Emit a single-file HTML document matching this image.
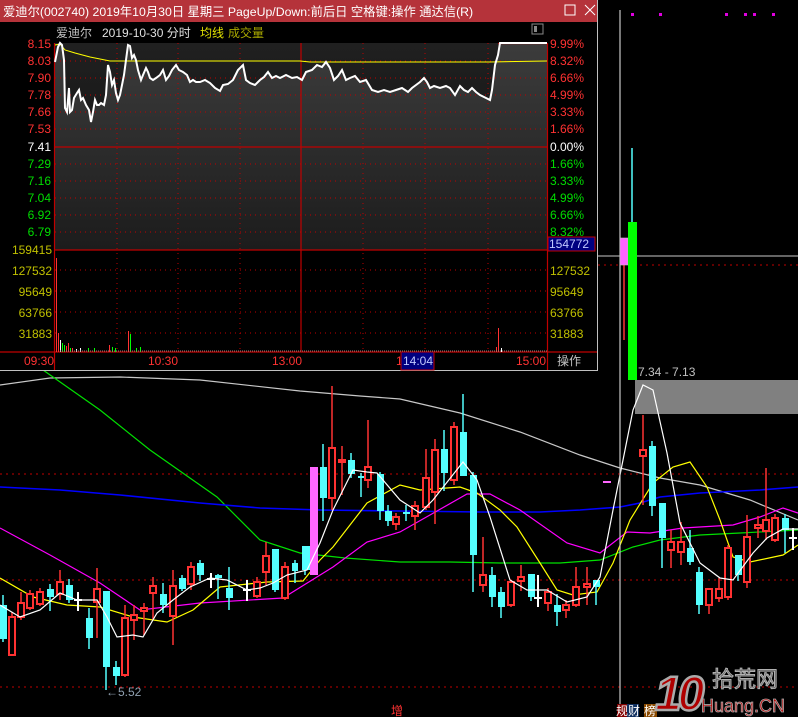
<!DOCTYPE html>
<html><head><meta charset="utf-8"><style>
html,body{margin:0;padding:0;background:#000;width:798px;height:717px;overflow:hidden}
svg{display:block}
text{font-family:"Liberation Sans","Noto Sans CJK SC",sans-serif}
</style></head><body>
<svg width="798" height="717" viewBox="0 0 798 717" xmlns="http://www.w3.org/2000/svg">
<defs>
<linearGradient id="pg" x1="0" y1="0" x2="0" y2="1"><stop offset="0" stop-color="#3c3c3c"/><stop offset="1" stop-color="#1c1c1c"/></linearGradient>
<linearGradient id="bg" x1="0" y1="0" x2="0" y2="1"><stop offset="0" stop-color="#202020"/><stop offset="1" stop-color="#0e0e0e"/></linearGradient>
</defs>
<rect width="798" height="717" fill="#000"/>
<g stroke="#c00000" stroke-width="1" stroke-dasharray="2,4">
<line x1="598" y1="265" x2="798" y2="265"/>
<line x1="0" y1="474" x2="798" y2="474"/>
<line x1="0" y1="580" x2="798" y2="580"/>
<line x1="0" y1="687" x2="798" y2="687"/>
</g>
<g fill="none" stroke-width="1.2">
<polyline stroke="#c8c8c8" points="0,385 50,378 120,377 200,380 300,391 360,396 400,399 460,413 520,432 580,455 620,468 660,478 700,485 750,500 798,520"/>
<polyline stroke="#00e000" points="43,370 100,410 150,450 217,497 260,540 300,553 345,558 400,562 450,562 500,563 560,563 600,560 633,547 660,540 700,535 740,533 798,530"/>
<polyline stroke="#0000ff" stroke-width="1.6" points="0,487 60,490 120,495 200,503 260,508 320,510 400,511 480,512 540,512 580,510 620,507 640,503 660,497 700,493 760,490 798,487"/>
<polyline stroke="#ff00ff" points="0,528 50,555 100,583 140,610 200,603 283,598 333,567 367,542 400,532 467,494 490,494 520,510 567,543 600,553 627,532 650,533 683,528 733,525 760,517 783,508 798,513"/>
<polyline stroke="#ffff00" points="0,578 33,597 67,605 100,607 133,617 167,622 193,610 220,587 267,582 303,581 320,560 333,547 367,503 400,485 420,490 460,487 477,493 500,510 517,527 540,563 557,590 573,595 597,592 613,563 630,520 653,483 673,467 690,462 707,487 720,520 733,557 750,562 783,555 798,545"/>
</g>
<rect x="635" y="380" width="163" height="34" fill="#808080"/>
<g>
<g stroke="#54ffff" stroke-width="1.5">
<line x1="3" y1="595" x2="3" y2="642"/><line x1="50" y1="584" x2="50" y2="611"/><line x1="69" y1="579" x2="69" y2="603"/><line x1="89" y1="608" x2="89" y2="649"/><line x1="106" y1="591" x2="106" y2="690"/><line x1="116" y1="661" x2="116" y2="685"/><line x1="163" y1="583" x2="163" y2="613"/><line x1="182" y1="575" x2="182" y2="591"/><line x1="200" y1="560" x2="200" y2="581"/><line x1="218" y1="574" x2="218" y2="599"/><line x1="229" y1="567" x2="229" y2="610"/><line x1="275" y1="549" x2="275" y2="592"/><line x1="295" y1="560" x2="295" y2="583"/><line x1="305" y1="546" x2="305" y2="575"/><line x1="323" y1="444" x2="323" y2="521"/><line x1="351" y1="453" x2="351" y2="478"/><line x1="361" y1="473" x2="361" y2="497"/><line x1="380" y1="472" x2="380" y2="520"/><line x1="388" y1="505" x2="388" y2="526"/><line x1="406" y1="505" x2="406" y2="521"/><line x1="444" y1="430" x2="444" y2="491"/><line x1="463" y1="394" x2="463" y2="476"/><line x1="473" y1="472" x2="473" y2="592"/><line x1="492" y1="567" x2="492" y2="607"/><line x1="501" y1="587" x2="501" y2="618"/><line x1="531" y1="574" x2="531" y2="601"/><line x1="557" y1="594" x2="557" y2="626"/><line x1="596" y1="580" x2="596" y2="605"/><line x1="652" y1="441" x2="652" y2="516"/><line x1="662" y1="503" x2="662" y2="568"/><line x1="690" y1="530" x2="690" y2="565"/><line x1="699" y1="567" x2="699" y2="614"/><line x1="738" y1="555" x2="738" y2="581"/><line x1="785" y1="514" x2="785" y2="553"/><line x1="632" y1="148" x2="632" y2="222"/>
</g>
<g fill="#54ffff">
<rect x="0" y="605" width="7" height="34"/><rect x="47" y="589" width="7" height="8"/><rect x="66" y="585" width="7" height="15"/><rect x="86" y="618" width="7" height="20"/><rect x="103" y="591" width="7" height="76"/><rect x="113" y="667" width="7" height="9"/><rect x="160" y="594" width="7" height="11"/><rect x="179" y="578" width="7" height="11"/><rect x="197" y="563" width="7" height="12"/><rect x="215" y="575" width="7" height="3"/><rect x="226" y="588" width="7" height="10"/><rect x="272" y="549" width="7" height="41"/><rect x="292" y="563" width="6" height="8"/><rect x="302" y="546" width="8" height="24"/><rect x="320" y="467" width="7" height="31"/><rect x="348" y="460" width="7" height="14"/><rect x="358" y="476" width="6" height="2"/><rect x="377" y="474" width="7" height="37"/><rect x="385" y="511" width="7" height="10"/><rect x="403" y="512" width="7" height="2"/><rect x="441" y="449" width="7" height="24"/><rect x="460" y="432" width="7" height="44"/><rect x="470" y="475" width="7" height="80"/><rect x="489" y="575" width="7" height="22"/><rect x="498" y="592" width="7" height="15"/><rect x="528" y="574" width="7" height="23"/><rect x="554" y="605" width="7" height="7"/><rect x="593" y="580" width="7" height="7"/><rect x="649" y="446" width="7" height="60"/><rect x="659" y="503" width="7" height="35"/><rect x="687" y="548" width="7" height="14"/><rect x="696" y="572" width="7" height="33"/><rect x="735" y="555" width="7" height="20"/><rect x="782" y="518" width="7" height="12"/>
</g>
<g stroke="#ff3232" stroke-width="1.5">
<line x1="12" y1="612" x2="12" y2="655"/><line x1="21" y1="592" x2="21" y2="620"/><line x1="30" y1="590" x2="30" y2="610"/><line x1="40" y1="588" x2="40" y2="606"/><line x1="60" y1="570" x2="60" y2="600"/><line x1="97" y1="568" x2="97" y2="638"/><line x1="125" y1="605" x2="125" y2="677"/><line x1="134" y1="605" x2="134" y2="640"/><line x1="144" y1="603" x2="144" y2="635"/><line x1="153" y1="577" x2="153" y2="620"/><line x1="173" y1="570" x2="173" y2="645"/><line x1="191" y1="562" x2="191" y2="590"/><line x1="257" y1="577" x2="257" y2="598"/><line x1="266" y1="542" x2="266" y2="585"/><line x1="285" y1="562" x2="285" y2="600"/><line x1="332" y1="386" x2="332" y2="510"/><line x1="342" y1="446" x2="342" y2="495"/><line x1="368" y1="420" x2="368" y2="488"/><line x1="396" y1="513" x2="396" y2="530"/><line x1="415" y1="501" x2="415" y2="530"/><line x1="426" y1="449" x2="426" y2="510"/><line x1="435" y1="439" x2="435" y2="524"/><line x1="454" y1="422" x2="454" y2="485"/><line x1="483" y1="537" x2="483" y2="592"/><line x1="511" y1="580" x2="511" y2="607"/><line x1="521" y1="565" x2="521" y2="591"/><line x1="548" y1="588" x2="548" y2="611"/><line x1="566" y1="600" x2="566" y2="618"/><line x1="576" y1="567" x2="576" y2="607"/><line x1="587" y1="567" x2="587" y2="605"/><line x1="643" y1="415" x2="643" y2="505"/><line x1="671" y1="530" x2="671" y2="568"/><line x1="681" y1="522" x2="681" y2="565"/><line x1="709" y1="589" x2="709" y2="614"/><line x1="719" y1="578" x2="719" y2="602"/><line x1="728" y1="545" x2="728" y2="600"/><line x1="747" y1="515" x2="747" y2="588"/><line x1="758" y1="516" x2="758" y2="538"/><line x1="766" y1="468" x2="766" y2="540"/><line x1="775" y1="514" x2="775" y2="542"/><line x1="624" y1="265" x2="624" y2="340"/>
</g>
<g fill="#000" stroke="#ff3232" stroke-width="2">
<rect x="9" y="617" width="6" height="38"/><rect x="18" y="603" width="6" height="14"/><rect x="27" y="594" width="6" height="14"/><rect x="37" y="592" width="6" height="12"/><rect x="57" y="582" width="6" height="12"/><rect x="94" y="589" width="6" height="13"/><rect x="122" y="618" width="6" height="57"/><rect x="131" y="615" width="6" height="5"/><rect x="141" y="608" width="6" height="3"/><rect x="150" y="586" width="6" height="7"/><rect x="170" y="586" width="6" height="30"/><rect x="188" y="567" width="6" height="17"/><rect x="254" y="582" width="6" height="14"/><rect x="263" y="556" width="6" height="16"/><rect x="282" y="567" width="6" height="31"/><rect x="329" y="448" width="6" height="50"/><rect x="339" y="460" width="6" height="2"/><rect x="365" y="467" width="6" height="13"/><rect x="393" y="517" width="6" height="7"/><rect x="412" y="506" width="6" height="10"/><rect x="423" y="478" width="6" height="29"/><rect x="432" y="450" width="6" height="42"/><rect x="451" y="427" width="6" height="53"/><rect x="480" y="575" width="6" height="10"/><rect x="508" y="582" width="6" height="23"/><rect x="518" y="577" width="6" height="4"/><rect x="545" y="592" width="6" height="11"/><rect x="563" y="605" width="6" height="5"/><rect x="573" y="587" width="6" height="18"/><rect x="584" y="584" width="6" height="3"/><rect x="640" y="450" width="6" height="6"/><rect x="668" y="542" width="6" height="8"/><rect x="678" y="542" width="6" height="10"/><rect x="706" y="589" width="6" height="16"/><rect x="716" y="589" width="6" height="9"/><rect x="725" y="548" width="6" height="49"/><rect x="744" y="537" width="6" height="45"/><rect x="755" y="525" width="6" height="3"/><rect x="763" y="520" width="6" height="11"/><rect x="772" y="518" width="6" height="22"/>
</g>
<rect x="310" y="467" width="8" height="108" fill="#ff66ff"/>
<g stroke="#fff" stroke-width="2">
<line x1="78" y1="592" x2="78" y2="611"/><line x1="74" y1="600" x2="82" y2="600"/>
<line x1="211" y1="573" x2="211" y2="588"/><line x1="207" y1="579" x2="215" y2="579"/>
<line x1="247" y1="580" x2="247" y2="601"/><line x1="243" y1="590" x2="251" y2="590"/>
<line x1="538" y1="575" x2="538" y2="607"/><line x1="534" y1="598" x2="542" y2="598"/>
<line x1="793" y1="528" x2="793" y2="550"/><line x1="789" y1="538" x2="797" y2="538"/>
</g>
</g>
<polyline fill="none" stroke="#fff" stroke-width="1.2" points="0,605 20,617 40,610 60,593 77,600 97,600 107,617 117,637 133,635 143,637 157,613 173,600 190,587 210,578 227,580 247,590 260,588 273,583 287,575 307,570 320,543 333,510 353,470 367,472 377,473 400,500 420,513 433,500 463,462 477,480 490,517 510,580 527,590 547,590 567,602 587,597 600,577 613,510 623,460 633,410 643,385 653,390 667,453 680,523 700,563 720,578 733,580 753,553 767,538 783,529 798,529"/>
<line x1="620" y1="10" x2="620" y2="717" stroke="#c8c8c8" stroke-width="1.2"/>
<line x1="598" y1="256" x2="798" y2="256" stroke="#c8c8c8" stroke-width="1"/>
<rect x="620" y="238" width="8" height="27" fill="#ff66ff" stroke="#c0c0c0" stroke-width="0.6"/>
<rect x="628" y="222" width="9" height="158" fill="#00ff00"/>
<line x1="603" y1="482" x2="611" y2="482" stroke="#ff66ff" stroke-width="2"/>
<g fill="#e000e0"><rect x="631" y="13" width="3" height="3"/><rect x="659" y="13" width="3" height="3"/><rect x="725" y="13" width="3" height="3"/><rect x="744" y="13" width="3" height="3"/><rect x="753" y="13" width="3" height="3"/><rect x="772" y="13" width="3" height="3"/></g>
<text x="638" y="376" font-size="12" fill="#c0c0c0">7.34 - 7.13</text>
<text x="106" y="696" font-size="12" fill="#8fa0b0">←5.52</text>
<text x="391" y="715" font-size="12" fill="#ff3232">增</text>
<rect x="617" y="704" width="10" height="13" fill="#800000"/><rect x="627" y="704" width="12" height="13" fill="#103060"/>
<text x="616" y="715" font-size="12" fill="#fff">规财</text>
<rect x="644" y="704" width="13" height="13" fill="#8a4a00"/>
<text x="644" y="715" font-size="12" fill="#fff">榜</text>
<g>
<text x="655" y="710" font-size="48" font-weight="bold" font-style="italic" fill="#b00000" stroke="#aaa" stroke-width="2.5" letter-spacing="-4">10</text>
<text x="712" y="687" font-size="22" fill="#505050" stroke="#b0b0b0" stroke-width="1" font-family="Noto Sans CJK SC,sans-serif">拾荒网</text>
<text x="701" y="712" font-size="18" fill="#c00000" stroke="#aaa" stroke-width="0.8">Huang.CN</text>
</g>

<rect x="0" y="0" width="598" height="371" fill="#000"/>
<rect x="0" y="0" width="598" height="22" fill="#b5333a"/>
<text x="3" y="16" font-size="12.3" fill="#fff">爱迪尔(002740) 2019年10月30日 星期三 PageUp/Down:前后日 空格键:操作 通达信(R)</text>
<rect x="565" y="5" width="10" height="10" fill="none" stroke="#fff" stroke-width="1"/>
<path d="M585 5 L595 15 M595 5 L585 15" stroke="#fff" stroke-width="1"/>
<line x1="597.5" y1="0" x2="597.5" y2="371" stroke="#c0c0c0"/>
<line x1="0" y1="370.5" x2="598" y2="370.5" stroke="#c0c0c0"/>
<text x="56" y="37" font-size="12" fill="#c0c0c0">爱迪尔</text>
<text x="102" y="37" font-size="12" fill="#e0e0e0">2019-10-30 分时</text>
<text x="200" y="37" font-size="12" fill="#e0e000">均线</text>
<text x="228" y="37" font-size="12" fill="#a8a800">成交量</text>
<rect x="532" y="24" width="11" height="10" fill="none" stroke="#888" stroke-width="1"/><rect x="534" y="26" width="3" height="6" fill="#888"/>
<rect x="55" y="43" width="492" height="207" fill="url(#bg)"/>
<polygon fill="url(#pg)" points="55,250 55,62 58,47 60,43 62,45 64,60 65,108 67,112 69,88 70,112 72,110 74,98 77,93 79,90 81,100 83,98 86,105 89,110 91,122 93,112 95,100 97,105 99,105 101,103 104,105 106,95 108,65 110,72 112,85 114,80 116,93 118,100 120,95 122,85 124,75 126,60 128,45 130,46 132,58 134,55 136,60 138,70 141,80 143,75 146,68 148,72 150,78 153,80 156,78 160,75 163,70 166,80 169,76 172,70 176,65 179,70 183,72 187,75 190,82 193,80 196,82 200,82 205,80 210,83 215,88 220,91 223,85 228,84 233,80 238,70 243,65 246,80 250,83 255,85 260,80 264,77 268,72 272,78 276,76 280,78 286,75 292,78 297,77 302,80 306,72 312,70 317,65 322,67 326,62 330,68 334,80 338,76 342,70 346,80 350,78 355,76 360,82 366,80 372,90 378,92 384,90 390,92 396,90 402,88 408,92 412,88 416,85 420,82 424,78 427,82 430,88 434,86 440,88 446,86 450,88 455,95 460,86 464,90 468,92 472,88 476,92 480,95 486,98 490,100 492,90 495,65 498,55 500,43 547,43 547,250"/>
<g stroke="#c00000" stroke-width="1" stroke-dasharray="1,4">
<line x1="55" y1="61" x2="547" y2="61"/><line x1="55" y1="78" x2="547" y2="78"/><line x1="55" y1="95" x2="547" y2="95"/><line x1="55" y1="112" x2="547" y2="112"/><line x1="55" y1="129" x2="547" y2="129"/><line x1="55" y1="164" x2="547" y2="164"/><line x1="55" y1="181" x2="547" y2="181"/><line x1="55" y1="198" x2="547" y2="198"/><line x1="55" y1="215" x2="547" y2="215"/><line x1="55" y1="232" x2="547" y2="232"/>
<line x1="55" y1="270" x2="547" y2="270"/><line x1="55" y1="291" x2="547" y2="291"/><line x1="55" y1="312" x2="547" y2="312"/><line x1="55" y1="333" x2="547" y2="333"/>
<line x1="117" y1="43" x2="117" y2="352"/><line x1="178" y1="43" x2="178" y2="352"/><line x1="240" y1="43" x2="240" y2="352"/><line x1="363" y1="43" x2="363" y2="352"/><line x1="425" y1="43" x2="425" y2="352"/><line x1="488" y1="43" x2="488" y2="352"/>
</g>
<g stroke="#c00000" stroke-width="1.2">
<line x1="54.5" y1="43" x2="54.5" y2="370"/><line x1="547.5" y1="43" x2="547.5" y2="370"/>
<line x1="301" y1="43" x2="301" y2="352"/>
<line x1="55" y1="147" x2="547" y2="147"/>
<line x1="55" y1="250" x2="547" y2="250"/>
<line x1="0" y1="352" x2="597" y2="352"/>
<line x1="498" y1="43.5" x2="547" y2="43.5"/>
</g>
<polyline fill="none" stroke="#ffff00" stroke-width="1" points="55,45 60,44 65,50 75,53 90,57 100,59 110,61 190,61 300,61 310,62 412,62 490,62 547,61"/>
<polyline fill="none" stroke="#fff" stroke-width="2" points="55,62 58,47 60,43 62,45 64,60 65,108 67,112 69,88 70,112 72,110 74,98 77,93 79,90 81,100 83,98 86,105 89,110 91,122 93,112 95,100 97,105 99,105 101,103 104,105 106,95 108,65 110,72 112,85 114,80 116,93 118,100 120,95 122,85 124,75 126,60 128,45 130,46 132,58 134,55 136,60 138,70 141,80 143,75 146,68 148,72 150,78 153,80 156,78 160,75 163,70 166,80 169,76 172,70 176,65 179,70 183,72 187,75 190,82 193,80 196,82 200,82 205,80 210,83 215,88 220,91 223,85 228,84 233,80 238,70 243,65 246,80 250,83 255,85 260,80 264,77 268,72 272,78 276,76 280,78 286,75 292,78 297,77 302,80 306,72 312,70 317,65 322,67 326,62 330,68 334,80 338,76 342,70 346,80 350,78 355,76 360,82 366,80 372,90 378,92 384,90 390,92 396,90 402,88 408,92 412,88 416,85 420,82 424,78 427,82 430,88 434,86 440,88 446,86 450,88 455,95 460,86 464,90 468,92 472,88 476,92 480,95 486,98 490,100 492,90 495,65 498,55 500,43 547,43"/>
<g stroke-width="1">
<line x1="56.5" y1="258" x2="56.5" y2="352" stroke="#ff3232"/><line x1="58.5" y1="333" x2="58.5" y2="352" stroke="#ff3232"/><line x1="60.5" y1="340" x2="60.5" y2="352" stroke="#fff"/><line x1="62.5" y1="343" x2="62.5" y2="352" stroke="#0f0"/><line x1="64.5" y1="345" x2="64.5" y2="352" stroke="#0f0"/><line x1="66.5" y1="346" x2="66.5" y2="352" stroke="#ff3232"/><line x1="68.5" y1="343" x2="68.5" y2="352" stroke="#ff3232"/><line x1="70.5" y1="348" x2="70.5" y2="352" stroke="#0f0"/><line x1="72.5" y1="348" x2="72.5" y2="352" stroke="#ff3232"/><line x1="76.5" y1="349" x2="76.5" y2="352" stroke="#fff"/><line x1="80.5" y1="348" x2="80.5" y2="352" stroke="#fff"/><line x1="88.5" y1="348" x2="88.5" y2="352" stroke="#0f0"/><line x1="94.5" y1="348" x2="94.5" y2="352" stroke="#0f0"/><line x1="109.5" y1="345" x2="109.5" y2="352" stroke="#ff3232"/><line x1="112.5" y1="347" x2="112.5" y2="352" stroke="#0f0"/><line x1="115.5" y1="348" x2="115.5" y2="352" stroke="#0f0"/><line x1="128.5" y1="331" x2="128.5" y2="352" stroke="#ff3232"/><line x1="130.5" y1="334" x2="130.5" y2="352" stroke="#0f0"/><line x1="136.5" y1="348" x2="136.5" y2="352" stroke="#0f0"/><line x1="140.5" y1="347" x2="140.5" y2="352" stroke="#0f0"/><line x1="496.5" y1="347" x2="496.5" y2="352" stroke="#ff3232"/><line x1="498.5" y1="328" x2="498.5" y2="352" stroke="#ff3232"/><line x1="501.5" y1="348" x2="501.5" y2="352" stroke="#fff"/>
</g>
<line x1="60" y1="351" x2="547" y2="351" stroke="#888" stroke-width="1" stroke-dasharray="1,1"/>
<g font-size="12" text-anchor="end">
<text x="51" y="48" fill="#ff3232">8.15</text><text x="51" y="65" fill="#ff3232">8.03</text><text x="51" y="82" fill="#ff3232">7.90</text><text x="51" y="99" fill="#ff3232">7.78</text><text x="51" y="116" fill="#ff3232">7.66</text><text x="51" y="133" fill="#ff3232">7.53</text><text x="51" y="151" fill="#fff">7.41</text><text x="51" y="168" fill="#00dd00">7.29</text><text x="51" y="185" fill="#00dd00">7.16</text><text x="51" y="202" fill="#00dd00">7.04</text><text x="51" y="219" fill="#00dd00">6.92</text><text x="51" y="236" fill="#00dd00">6.79</text>
<text x="52" y="254" fill="#c0c000">159415</text><text x="52" y="275" fill="#c0c000">127532</text><text x="52" y="296" fill="#c0c000">95649</text><text x="52" y="317" fill="#c0c000">63766</text><text x="52" y="338" fill="#c0c000">31883</text>
</g>
<g font-size="12">
<text x="550" y="48" fill="#ff3232">9.99%</text><text x="550" y="65" fill="#ff3232">8.32%</text><text x="550" y="82" fill="#ff3232">6.66%</text><text x="550" y="99" fill="#ff3232">4.99%</text><text x="550" y="116" fill="#ff3232">3.33%</text><text x="550" y="133" fill="#ff3232">1.66%</text><text x="550" y="151" fill="#fff">0.00%</text><text x="550" y="168" fill="#00dd00">1.66%</text><text x="550" y="185" fill="#00dd00">3.33%</text><text x="550" y="202" fill="#00dd00">4.99%</text><text x="550" y="219" fill="#00dd00">6.66%</text><text x="550" y="236" fill="#00dd00">8.32%</text>
<text x="550" y="275" fill="#c0c000">127532</text><text x="550" y="296" fill="#c0c000">95649</text><text x="550" y="317" fill="#c0c000">63766</text><text x="550" y="338" fill="#c0c000">31883</text>
</g>
<rect x="548" y="237" width="47" height="14" fill="#000080" stroke="#c00000" stroke-width="1"/>
<text x="549" y="248" font-size="12" fill="#c0c8ff">154772</text>
<g font-size="12" fill="#ff3232">
<text x="24" y="365">09:30</text><text x="148" y="365">10:30</text><text x="272" y="365">13:00</text><text x="396" y="365">1</text><text x="516" y="365">15:00</text>
</g>
<rect x="401" y="352" width="33" height="18" fill="#000080" stroke="#c00000" stroke-width="1"/>
<text x="403" y="365" font-size="12" fill="#c0c8ff">14:04</text>
<text x="557" y="365" font-size="12" fill="#c0c0c0">操作</text>
</svg>
</body></html>
